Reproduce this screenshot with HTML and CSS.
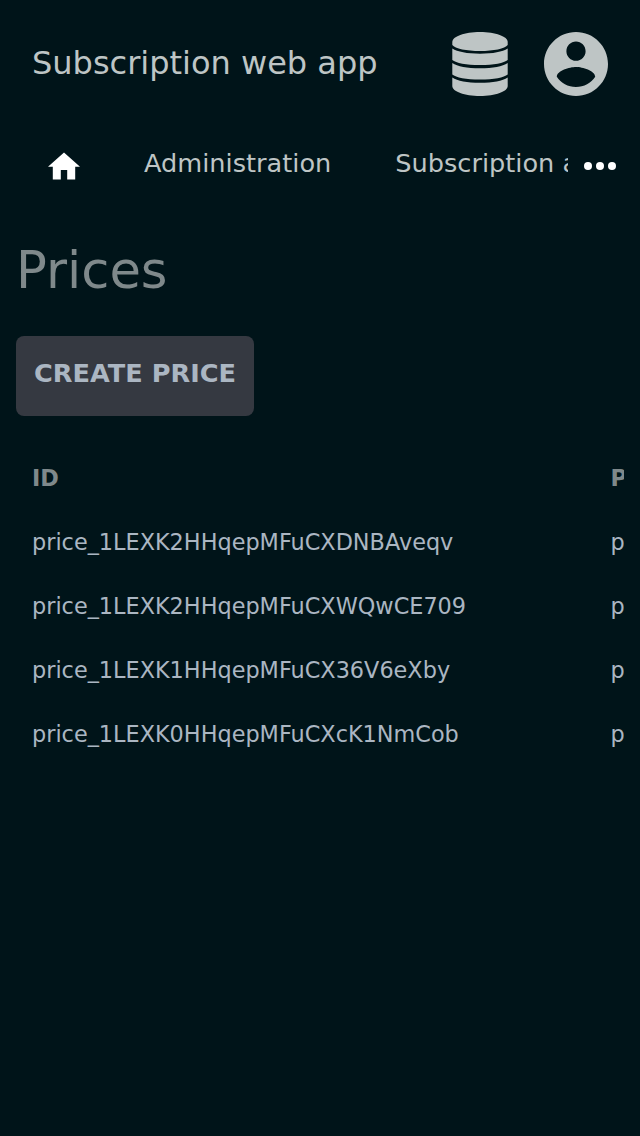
FILE: index.html
```html
<!DOCTYPE html>
<html lang="en">
<head>
<meta charset="utf-8">
<title>Subscription web app</title>
<link rel="stylesheet" href="styles.css">
</head>
<body>
<header class="header">
  <div class="brand">Subscription web app</div>
  <svg class="database" viewBox="0 0 56 64"><path d="M.3 10C.3 4.500 12.500 0 28 0s27.700 4.500 27.700 10v3C53 16.800 41.500 19 28 19S3 16.800.3 13z"/><path d="M.3 16.600C5.500 20 15 21.700 28 21.700S50.500 20 55.700 16.600V28C52 31 42 33 28 33S4 31 .3 28z"/><path d="M.3 31C5.500 34.500 15 36.300 28 36.300S50.500 34.500 55.700 31V42.400C52 45.500 42 47.500 28 47.500S4 45.500.3 42.400z"/><path d="M.3 45.500C5.500 49 15 50.800 28 50.800S50.500 49 55.700 45.500V54C55.700 59.500 43.500 64 28 64S.3 59.500.3 54z"/></svg>
  <svg class="account" viewBox="2 2 20 20"><path d="M12 2C6.480 2 2 6.480 2 12s4.480 10 10 10 10-4.480 10-10S17.520 2 12 2zm0 3c1.660 0 3 1.340 3 3s-1.340 3-3 3-3-1.340-3-3 1.340-3 3-3zm0 14.200c-2.500 0-4.710-1.280-6-3.220.03-1.990 4-3.080 6-3.080 1.990 0 5.970 1.090 6 3.080-1.290 1.940-3.500 3.220-6 3.220z"/></svg>
</header>
<nav class="nav">
  <svg class="home" viewBox="0 0 20 17"><path d="M8 17v-6h4v6h5V9h3L10 0 0 9h3v8z"/></svg>
  <div class="links"><span>Administration</span><span>Subscription administration</span></div>
  <svg class="more" viewBox="0 0 32 8"><circle cx="4" cy="4" r="4"/><circle cx="16" cy="4" r="4"/><circle cx="28" cy="4" r="4"/></svg>
</nav>
<main class="content">
  <h1 class="title">Prices</h1>
  <button class="create">CREATE PRICE</button>
  <div class="table-wrap">
    <table class="table">
      <thead><tr><th>ID</th><th>Product ID</th></tr></thead>
      <tbody>
        <tr><td>price_1LEXK2HHqepMFuCXDNBAveqv</td><td>prod</td></tr>
        <tr><td>price_1LEXK2HHqepMFuCXWQwCE709</td><td>prod</td></tr>
        <tr><td>price_1LEXK1HHqepMFuCX36V6eXby</td><td>prod</td></tr>
        <tr><td>price_1LEXK0HHqepMFuCXcK1NmCob</td><td>prod</td></tr>
      </tbody>
    </table>
  </div>
</main>
</body>
</html>
```
FILE: styles.css
```css
* { box-sizing: border-box; }
body { margin: 0; min-height: 1136px; background: #001419; font-family: "DejaVu Sans", sans-serif; overflow: hidden; }
.header { display: flex; align-items: center; height: 128px; padding: 0 32px; fill: #bec5c5; }
.brand { flex: 1; padding-bottom: 2px; font-size: 32px; line-height: 48px; color: #bec5c5; }
.database { width: 56px; height: 64px; margin-right: 36px; }
.account { width: 64px; height: 64px; }
.nav { display: flex; height: 72px; padding: 0 24px 0 48px; fill: #fff; }
.home { width: 32px; height: 28px; margin: 24px 64px 0 0; flex: none; }
.links { display: flex; gap: 64px; width: 424px; overflow: hidden; white-space: nowrap; color: #bec5c5; font-size: 25.6px; line-height: 70px; }
.more { width: 32px; height: 8px; margin: 34px 0 0 16px; flex: none; }
.content { padding: 34px 16px 0; }
.title { margin: 0; font-size: 51.2px; font-weight: 400; line-height: 72px; color: #7f898b; }
.create { display: block; width: 238px; height: 80px; margin-top: 30px; padding: 0 0 7px; border: 0; border-radius: 8px; background: #353941; color: #abb6c2; font: bold 25.6px "DejaVu Sans", sans-serif; }
.table-wrap { margin-top: 32px; overflow: hidden; }
.table { width: 900px; table-layout: fixed; border-collapse: collapse; font-size: 22.37px; color: #abb6c2; }
.table th, .table td { height: 64px; padding: 0 16px 4px; text-align: left; white-space: nowrap; }
.table th { color: #7f898b; }
.table th:first-child { width: 578.6px; }
```
